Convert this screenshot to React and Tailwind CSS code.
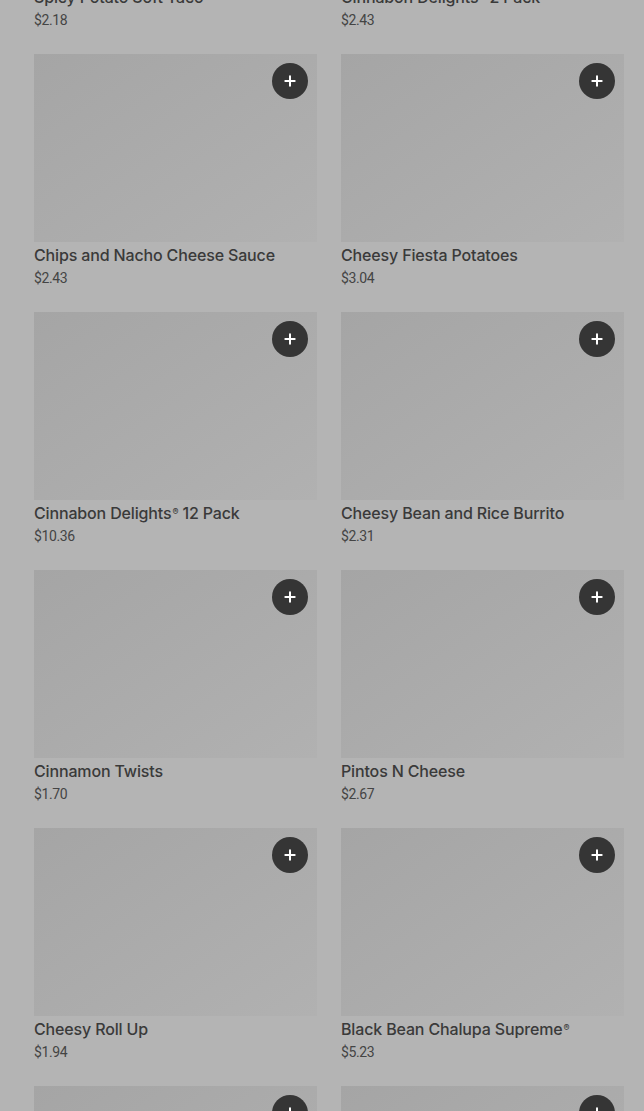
import { Plus } from 'lucide-react';

const items = [
  { name: 'Spicy Potato Soft Taco', price: '$2.18' },
  { name: 'Cinnabon Delights', reg: true, rest: ' 2 Pack', price: '$2.43' },
  { name: 'Chips and Nacho Cheese Sauce', price: '$2.43' },
  { name: 'Cheesy Fiesta Potatoes', price: '$3.04' },
  { name: 'Cinnabon Delights', reg: true, rest: ' 12 Pack', price: '$10.36' },
  { name: 'Cheesy Bean and Rice Burrito', price: '$2.31' },
  { name: 'Cinnamon Twists', price: '$1.70' },
  { name: 'Pintos N Cheese', price: '$2.67' },
  { name: 'Cheesy Roll Up', price: '$1.94' },
  { name: 'Black Bean Chalupa Supreme', reg: true, rest: '', price: '$5.23' },
  { name: 'Crunchy Taco', price: '$1.89' },
  { name: 'Soft Taco', price: '$1.89' },
];

function ItemCard({ item }) {
  return (
    <div className="flex flex-col">
      <div className="relative h-[188px] bg-gradient-to-br from-[#a5a5a5] to-[#b1b1b1]">
        <button className="absolute top-[9px] right-[9px] w-9 h-9 rounded-full bg-[#353535] flex items-center justify-center">
          <Plus size={16} strokeWidth={3} className="text-white" />
        </button>
      </div>
      <p className="mt-px mb-px text-[16px] leading-6 font-medium text-[#3a3a3a] tracking-[-0.15px]" style={{ fontFamily: 'Inter, Roboto, sans-serif' }}>
        {item.name}
        {item.reg && <sup className="text-[9px] ml-px">®</sup>}
        {item.rest}
      </p>
      <p className="text-[14px] leading-5 text-[#444] tracking-[-0.4px]">{item.price}</p>
    </div>
  );
}

export default function App() {
  return (
    <div className="h-[1111px] overflow-hidden bg-[#b4b4b4]" style={{ fontFamily: 'Roboto, "Noto Sans", sans-serif' }}>
      <div className="-mt-[204px] pl-[34px] pr-[20px] grid grid-cols-2 gap-x-6 gap-y-6">
        {items.map((item, i) => (
          <ItemCard key={i} item={item} />
        ))}
      </div>
    </div>
  );
}
